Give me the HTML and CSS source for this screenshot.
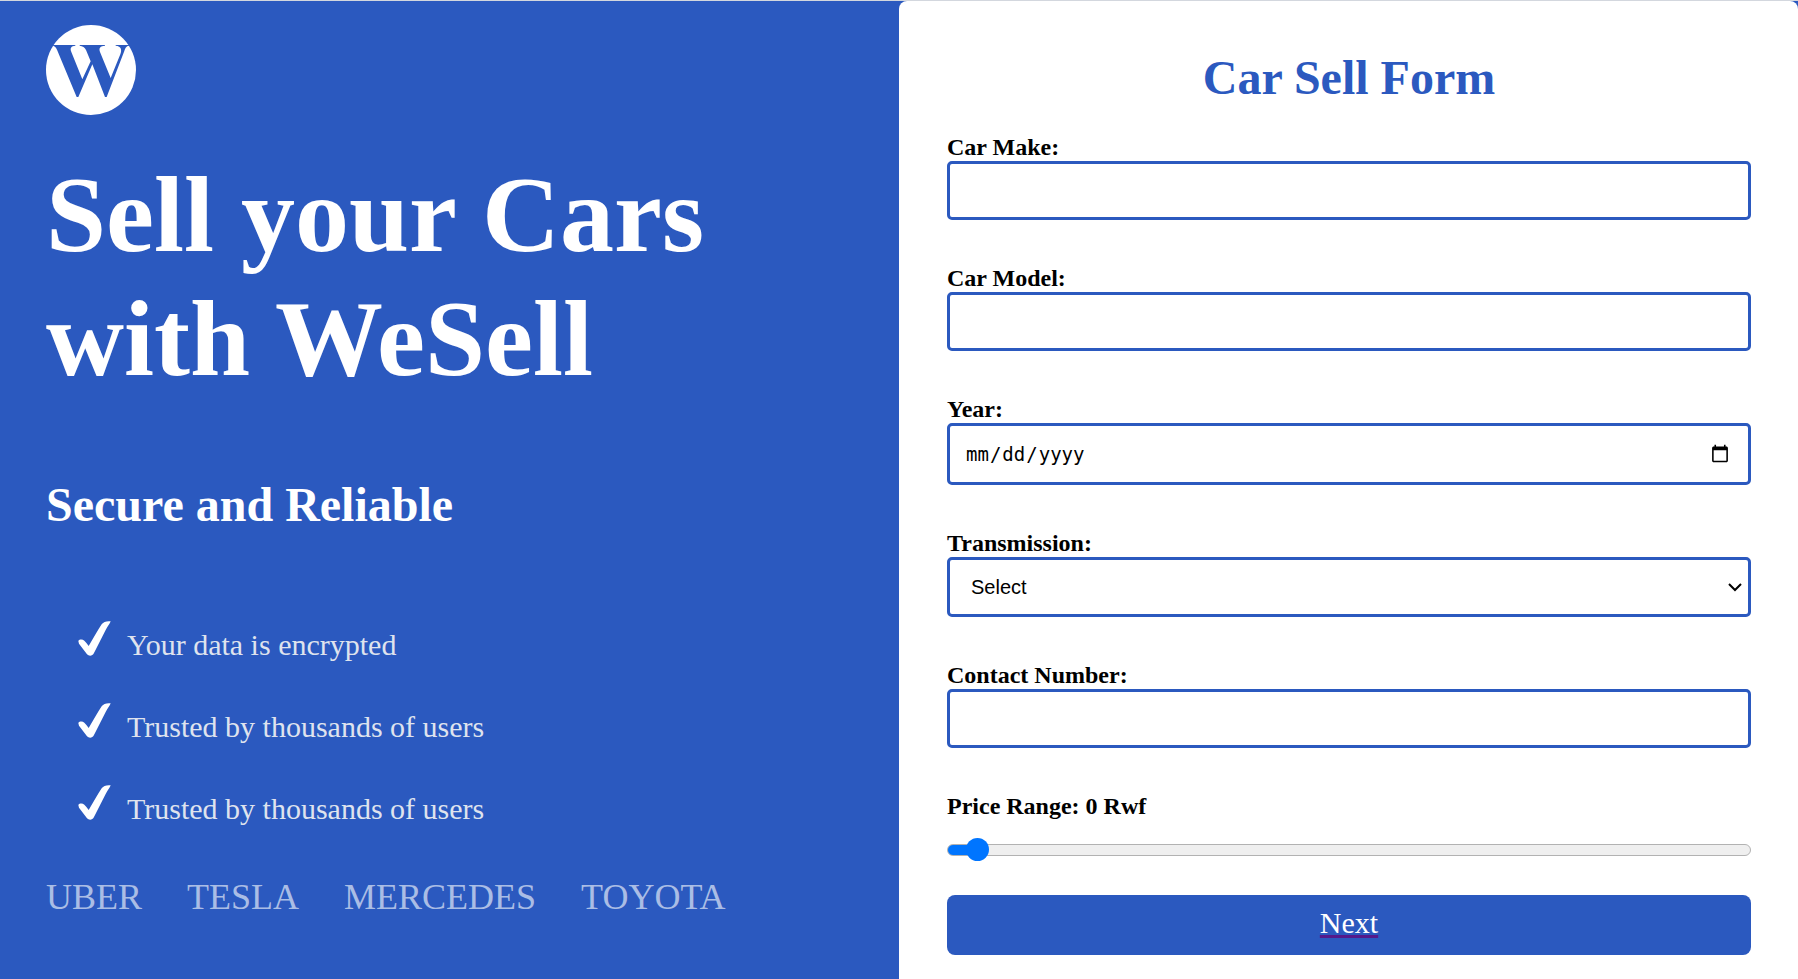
FILE: index.html
```html
<!DOCTYPE html>
<html lang="en">
<head>
<meta charset="utf-8">
<meta name="viewport" content="width=device-width, initial-scale=1">
<title>Car Sell Form</title>
<link rel="stylesheet" href="styles.css">
</head>
<body>
<svg class="defs" width="0" height="0" aria-hidden="true">
  <symbol id="check" viewBox="0 0 97 105"><path d="M0 60C3 55 12 54 18 59C23 64 27 69 31 75C42 57 56 31 70 10C76 2 84 0 97 1C95 8 88 16 82 27L47 96C42 106 32 106 26 100L2 68Z"/></symbol>
</svg>
<main class="page">
  <section class="intro">
    <svg class="logo" viewBox="0 0 270 270" role="img" aria-label="WeSell">
      <circle class="logo-disc" cx="135" cy="135" r="135"/>
      <path class="logo-mark" d="M22 60H88V62C76 63 71 68 76 81L109 163L134 109L120 75C116 66 110 63 101 62V60H177V62C163 63 158 68 162 81L194 159L223 88C228 74 226 64 209 62V60H249V62C240 63 238 70 235 78L182 216H177L139 118L97 216H92L37 84C32 70 28 63 21 62Z"/>
    </svg>
    <h1 class="headline">Sell your Cars<br>with WeSell</h1>
    <h2 class="subhead">Secure and Reliable</h2>
    <ul class="points">
      <li class="point"><svg class="tick" aria-hidden="true"><use href="#check"/></svg><span>Your data is encrypted</span></li>
      <li class="point"><svg class="tick" aria-hidden="true"><use href="#check"/></svg><span>Trusted by thousands of users</span></li>
      <li class="point"><svg class="tick" aria-hidden="true"><use href="#check"/></svg><span>Trusted by thousands of users</span></li>
    </ul>
    <div class="brands"><span>UBER</span><span>TESLA</span><span>MERCEDES</span><span>TOYOTA</span></div>
  </section>
  <form class="form">
    <h2 class="form-title">Car Sell Form</h2>
    <div class="field">
      <label for="make">Car Make:</label>
      <input class="control" id="make" type="text">
    </div>
    <div class="field">
      <label for="model">Car Model:</label>
      <input class="control" id="model" type="text">
    </div>
    <div class="field">
      <label for="year">Year:</label>
      <input class="control control-date" id="year" type="date">
    </div>
    <div class="field">
      <label for="transmission">Transmission:</label>
      <div class="select-wrap">
        <select class="control control-select" id="transmission"><option>Select</option><option>Automatic</option><option>Manual</option></select>
        <svg class="chevron" viewBox="0 0 14 9" aria-hidden="true"><path d="M1 1L7 7L13 1"/></svg>
      </div>
    </div>
    <div class="field">
      <label for="contact">Contact Number:</label>
      <input class="control" id="contact" type="tel">
    </div>
    <div class="field price">
      <label for="price">Price Range: 0 Rwf</label>
      <input class="slider" id="price" type="range" min="0" max="1000" value="23">
    </div>
    <button class="next" type="button"><span class="next-text">Next</span></button>
  </form>
</main>
</body>
</html>
```
FILE: styles.css
```css
:root {
  --blue: #2b59bf;
}

* {
  box-sizing: border-box;
}

body {
  margin: 0;
  border-top: 1px solid #d3d7de;
  background: var(--blue);
  font-family: "Liberation Serif", "Times New Roman", serif;
}

h1, h2, ul {
  margin: 0;
  padding: 0;
}

.defs {
  position: absolute;
}

.page {
  display: grid;
  grid-template-columns: 1fr 1fr;
  min-height: calc(100vh - 1px);
}

.intro {
  padding: 24px 46px;
  color: #fff;
}

.logo {
  display: block;
  width: 90px;
  height: 90px;
}

.logo-disc {
  fill: #fff;
}

.logo-mark {
  fill: var(--blue);
}

.headline {
  margin-top: 38px;
  font-size: 108px;
  line-height: 124px;
}

.subhead {
  margin-top: 77px;
  font-size: 48px;
  line-height: 54px;
}

.points {
  display: flex;
  flex-direction: column;
  gap: 41px;
  margin-top: 89px;
  padding-left: 32px;
  list-style: none;
}

.point {
  display: flex;
  align-items: flex-end;
  gap: 16px;
  height: 41px;
  color: #dfe3ee;
  font-size: 30px;
  line-height: 34px;
}

.tick {
  align-self: flex-start;
  width: 33px;
  height: 35px;
  fill: #fff;
}

.brands {
  display: flex;
  gap: 45px;
  margin-top: 51px;
  color: #aabde5;
  font-size: 36px;
  line-height: 41px;
}

.form {
  padding: 49px 47px 24px 48px;
  border-radius: 8px 8px 0 0;
  background: #fff;
}

.form-title {
  margin-bottom: 27px;
  color: var(--blue);
  font-size: 48px;
  line-height: 56px;
  text-align: center;
}

.field {
  display: flex;
  flex-direction: column;
  margin-bottom: 44px;
}

.field label {
  color: #000;
  font-size: 24px;
  font-weight: bold;
  line-height: 28px;
}

.control {
  width: 100%;
  height: 59px;
  padding: 0 16px;
  border: 3px solid var(--blue);
  border-radius: 5px;
  outline: none;
  background: #fff;
  color: #000;
  font: 20px "Liberation Sans", Arial, sans-serif;
}

.control-date {
  height: 62px;
  padding-right: 18px;
  padding-left: 15px;
  font: 19px "DejaVu Sans Mono", monospace;
}

.control-date::-webkit-calendar-picker-indicator {
  width: 20px;
  height: 20px;
  padding: 0;
}

.select-wrap {
  position: relative;
}

.control-select {
  display: block;
  height: 60px;
  padding: 0 21px;
  appearance: none;
}

.chevron {
  position: absolute;
  top: 26px;
  right: 9px;
  width: 14px;
  height: 9px;
  fill: none;
  stroke: #000;
  stroke-width: 2;
  pointer-events: none;
}

.price {
  gap: 18px;
  margin-bottom: 33px;
}

.slider {
  width: 100%;
  height: 24px;
  margin: 0;
  appearance: none;
  background: transparent;
}

.slider::-webkit-slider-runnable-track {
  height: 12px;
  border: 1px solid #b2b2b2;
  border-radius: 6px;
  background: linear-gradient(to right, #0075ff 3%, #efefef 3%);
}

.slider::-webkit-slider-thumb {
  width: 23px;
  height: 23px;
  margin-top: -7px;
  border-radius: 50%;
  appearance: none;
  background: #0075ff;
}

.next {
  display: block;
  width: 100%;
  height: 60px;
  padding: 0 0 4px;
  border: 0;
  border-radius: 8px;
  background: var(--blue);
  color: #fff;
  font: 30px/34px "Liberation Serif", "Times New Roman", serif;
}

.next-text {
  text-decoration: underline 3px #551a8b;
  text-decoration-skip-ink: none;
}
```
